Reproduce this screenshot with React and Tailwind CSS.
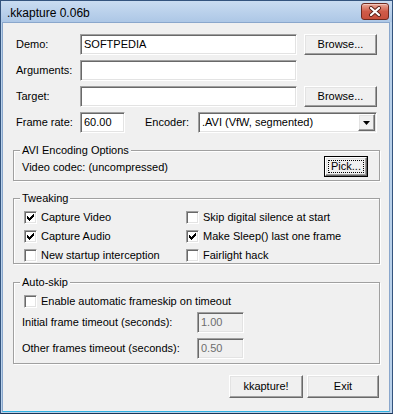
import React from 'react';

const sunken =
  "border border-[#a0a0a0] border-b-white border-r-white shadow-[inset_1px_1px_0_#696969,inset_-1px_-1px_0_#e3e3e3]";
const raised =
  "border border-white border-b-[#696969] border-r-[#696969] shadow-[inset_-1px_-1px_0_#a0a0a0,inset_1px_1px_0_#e3e3e3]";

const TextBox = ({ value = '', width, disabled = false }) => (
  <div
    className={`${sunken} ${width} h-[21px] flex items-center pl-[3px] ${
      disabled ? 'bg-[#f0f0f0] text-[#6d6d6d]' : 'bg-white'
    }`}
  >
    {value}
  </div>
);

const Button = ({ children, width, height = 'h-[21px]' }) => (
  <div className={`${raised} ${width} ${height} bg-[#f0f0f0] flex items-center justify-center`}>
    {children}
  </div>
);

const CheckMark = () => (
  <svg width="7" height="7" viewBox="0 0 7 7" shapeRendering="crispEdges">
    <path
      d="M6 0h1v1h-1z M5 1h2v1h-2z M0 2h1v1h-1z M4 2h3v1h-3z M0 3h2v1h-2z M3 3h3v1h-3z M0 4h5v1h-5z M1 5h3v1h-3z M2 6h1v1h-1z"
      fill="#000"
    />
  </svg>
);

const CheckBox = ({ checked, label }) => (
  <div className="flex items-center h-[16px]">
    <span className={`${sunken} w-[13px] h-[13px] shrink-0 bg-white flex items-center justify-center`}>
      {checked && <CheckMark />}
    </span>
    <span className="ml-[4px] whitespace-nowrap">{label}</span>
  </div>
);

const Group = ({ title, className = '', children }) => (
  <div
    className={`relative border border-[#a0a0a0] shadow-[inset_1px_1px_0_#fff,1px_1px_0_#fff] ${className}`}
  >
    <span className="absolute left-[6px] top-[-8px] px-[2px] leading-[14px] bg-[#f0f0f0] whitespace-nowrap">
      {title}
    </span>
    {children}
  </div>
);

const CloseButton = () => (
  <div className="w-[28px] h-[17px] rounded-[3px] border border-[#6e2a20] bg-gradient-to-b from-[#e9a898] via-[#cf5b48] to-[#c8503c] shadow-[inset_0_1px_0_#f3c6bb] flex items-center justify-center">
    <svg width="14" height="11" viewBox="0 0 14 11">
      <path d="M3 2 L11 9 M11 2 L3 9" stroke="#5b2018" strokeWidth="4" strokeLinecap="round" />
      <path d="M3 2 L11 9 M11 2 L3 9" stroke="#fff" strokeWidth="2.2" strokeLinecap="round" />
    </svg>
  </div>
);

export default function App() {
  return (
    <div className="w-[393px] h-[414px] flex flex-col bg-[#b9d1ea] border border-[#34547e] border-b-[#1b3556] font-['Liberation_Sans',Arial,sans-serif] text-[11px] text-black select-none">
      {/* Title bar */}
      <div className="h-[21px] shrink-0 flex items-center justify-between pl-[6px] pr-[3px] bg-gradient-to-b from-[#c9dcf1] to-[#adc7e6]">
        <span className="text-[12px] pt-[2px]">.kkapture 0.06b</span>
        <CloseButton />
      </div>

      {/* Client area */}
      <div className="flex-1 ml-[1px] mr-[2px] mb-[1px] bg-[#f0f0f0] border border-[#8aa7cc] border-b-[#2fb3e3] flex flex-col pt-[11px] pl-[10px] pr-[9px]">
        <div className="flex items-center h-[21px]">
          <span className="w-[67px] pl-[3px]">Demo:</span>
          <TextBox value="SOFTPEDIA" width="w-[217px]" />
          <div className="ml-[7px]">
            <Button width="w-[73px]">Browse...</Button>
          </div>
        </div>
        <div className="flex items-center h-[21px] mt-[5px]">
          <span className="w-[67px] pl-[3px]">Arguments:</span>
          <TextBox width="w-[217px]" />
        </div>
        <div className="flex items-center h-[21px] mt-[5px]">
          <span className="w-[67px] pl-[3px]">Target:</span>
          <TextBox width="w-[217px]" />
          <div className="ml-[7px]">
            <Button width="w-[73px]">Browse...</Button>
          </div>
        </div>
        <div className="flex items-center h-[21px] mt-[5px]">
          <span className="w-[67px] pl-[3px]">Frame rate:</span>
          <TextBox value="60.00" width="w-[45px]" />
          <span className="ml-[20px] w-[53px]">Encoder:</span>
          <div className={`${sunken} w-[179px] h-[21px] bg-white flex items-center justify-between pl-[3px] pr-[1px]`}>
            <span>.AVI (VfW, segmented)</span>
            <div className={`${raised} w-[17px] h-[17px] bg-[#f0f0f0] flex items-center justify-center`}>
              <svg width="7" height="4" viewBox="0 0 7 4">
                <polygon points="0,0 7,0 3.5,4" fill="#000" />
              </svg>
            </div>
          </div>
        </div>

        <Group title="AVI Encoding Options" className="mt-[17px] pt-[5px] pb-[3px] pl-[8px] pr-[11px]">
          <div className="flex items-center justify-between">
            <span className="pt-[1px]">Video codec: (uncompressed)</span>
            <div className="w-[44px] h-[21px] border border-black">
              <div className={`${raised} w-full h-full bg-[#f0f0f0] p-[2px]`}>
                <div className="w-full h-full border border-dotted border-black flex items-center justify-center">
                  Pick...
                </div>
              </div>
            </div>
          </div>
        </Group>

        <Group title="Tweaking" className="mt-[17px] pt-[10px] pl-[10px]">
          <div className="grid grid-cols-[162px_1fr] gap-y-[3px]">
            <CheckBox checked label="Capture Video" />
            <CheckBox label="Skip digital silence at start" />
            <CheckBox checked label="Capture Audio" />
            <CheckBox checked label="Make Sleep() last one frame" />
            <CheckBox label="New startup interception" />
            <CheckBox label="Fairlight hack" />
          </div>
        </Group>

        <Group title="Auto-skip" className="mt-[18px] pt-[10px] pb-[5px]">
          <div className="pl-[10px]">
            <CheckBox label="Enable automatic frameskip on timeout" />
          </div>
          <div className="flex items-center h-[20px] mt-[3px] pl-[8px]">
            <span className="w-[175px]">Initial frame timeout (seconds):</span>
            <TextBox value="1.00" width="w-[47px]" disabled />
          </div>
          <div className="flex items-center h-[20px] mt-[6px] pl-[8px]">
            <span className="w-[175px]">Other frames timeout (seconds):</span>
            <TextBox value="0.50" width="w-[47px]" disabled />
          </div>
        </Group>

        <div className="flex justify-end gap-[4px] mt-[11px] pr-[1px]">
          <Button width="w-[74px]" height="h-[23px]">kkapture!</Button>
          <Button width="w-[72px]" height="h-[23px]">Exit</Button>
        </div>
      </div>
    </div>
  );
}
